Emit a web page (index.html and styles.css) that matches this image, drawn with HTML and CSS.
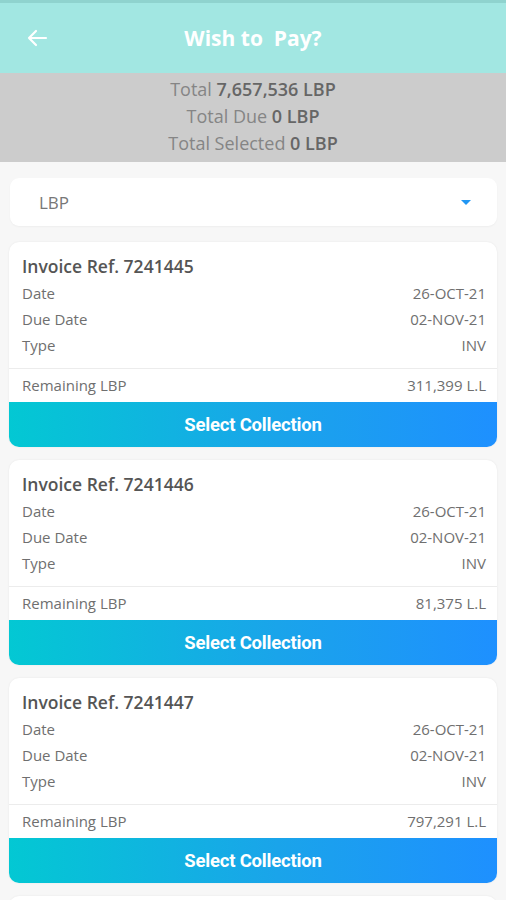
FILE: index.html
```html
<!DOCTYPE html>
<html>
    <head>
        <meta charset="UTF-8">
        <meta name="viewport" content="width=device-width, initial-scale=1.0">
        <title>Wish to Pay?</title>
        <link rel="stylesheet" href="styles.css">
    </head>
    <body>
        <div class="topbar">
            <svg class="backicon" width="24" height="24" viewBox="0 0 24 24">
                <path d="M21 12H4M11 5l-7 7 7 7" fill="none" stroke="white" stroke-width="2.2" stroke-linecap="round" stroke-linejoin="round"/>
            </svg>
            <h1>Wish to&nbsp; Pay?</h1>
        </div>

        <div class="summary">
            <p>Total <b>7,657,536 LBP</b></p>
            <p>Total Due <b>0 LBP</b></p>
            <p>Total Selected <b>0 LBP</b></p>
        </div>

        <div class="content">
            <div class="dropdown">
                <span>LBP</span>
                <span class="caret"></span>
            </div>

            <div class="invoice">
                <div class="invoicebody">
                    <h2>Invoice Ref. 7241445</h2>
                    <div class="row"><span>Date</span><span>26-OCT-21</span></div>
                    <div class="row"><span>Due Date</span><span>02-NOV-21</span></div>
                    <div class="row"><span>Type</span><span>INV</span></div>
                </div>
                <div class="row remaining"><span>Remaining LBP</span><span>311,399 L.L</span></div>
                <button class="selectbutton">Select Collection</button>
            </div>

            <div class="invoice">
                <div class="invoicebody">
                    <h2>Invoice Ref. 7241446</h2>
                    <div class="row"><span>Date</span><span>26-OCT-21</span></div>
                    <div class="row"><span>Due Date</span><span>02-NOV-21</span></div>
                    <div class="row"><span>Type</span><span>INV</span></div>
                </div>
                <div class="row remaining"><span>Remaining LBP</span><span>81,375 L.L</span></div>
                <button class="selectbutton">Select Collection</button>
            </div>

            <div class="invoice">
                <div class="invoicebody">
                    <h2>Invoice Ref. 7241447</h2>
                    <div class="row"><span>Date</span><span>26-OCT-21</span></div>
                    <div class="row"><span>Due Date</span><span>02-NOV-21</span></div>
                    <div class="row"><span>Type</span><span>INV</span></div>
                </div>
                <div class="row remaining"><span>Remaining LBP</span><span>797,291 L.L</span></div>
                <button class="selectbutton">Select Collection</button>
            </div>

            <div class="invoice nextcard"></div>
        </div>
    </body>
</html>
```

FILE: styles.css
```css
*{
    font-family: "Open Sans", "Noto Sans", sans-serif;
    box-sizing: border-box;
}
body{
    margin: 0;
    background-color: #f7f7f7;
    overflow: hidden;
    height: 900px;
}
.topbar{
    height: 73px;
    background-color: #a2e7e2;
    border-top: solid 3px #8fd3ce;
    display: flex;
    align-items: center;
    justify-content: center;
    position: relative;
}
.backicon{
    position: absolute;
    left: 25px;
    top: 23px;
}
h1{
    margin: 0;
    color: white;
    font-size: 21px;
    font-weight: 700;
}
.summary{
    background-color: #cccccc;
    height: 89px;
    padding-top: 5px;
    text-align: center;
    color: #858585;
    font-size: 18px;
}
.summary p{
    margin: 0;
    height: 27px;
    line-height: 22px;
}
.summary b{
    color: #666;
    font-weight: 600;
}
.content{
    padding: 16px 9px 0 9px;
}
.dropdown{
    margin: 0 0 0 1px;
    width: 487px;
    height: 48px;
    background-color: white;
    border-radius: 9px;
    display: flex;
    align-items: center;
    justify-content: space-between;
    padding: 0 26px 0 29px;
    color: #777;
    font-size: 17px;
    box-shadow: 0 1px 2px rgba(0,0,0,0.04);
}
.caret{
    width: 0;
    height: 0;
    border-left: 5px solid transparent;
    border-right: 5px solid transparent;
    border-top: 5px solid #2196f3;
}
.invoice{
    margin-top: 16px;
    background-color: white;
    border-radius: 10px;
    box-shadow: 0 0 2px rgba(0,0,0,0.08);
}
.invoice + .invoice{
    margin-top: 13px;
}
.nextcard{
    height: 40px;
}
.invoicebody{
    padding: 12px 11px 8px 13px;
    border-bottom: solid 1px #ececec;
}
h2{
    margin: 0 0 4px 0;
    font-size: 17.5px;
    font-weight: 600;
    color: #555;
    line-height: 24px;
}
.row{
    display: flex;
    justify-content: space-between;
    font-size: 15px;
    color: #6f6f6f;
    height: 26px;
    line-height: 22px;
}
.remaining{
    padding: 5px 11px 0 13px;
    height: 33px;
}
.selectbutton{
    display: block;
    width: 100%;
    height: 45px;
    border: none;
    border-radius: 0 0 10px 10px;
    background: linear-gradient(90deg, #03c8d3 0%, #1aa4ea 55%, #1e90ff 100%);
    color: white;
    font-family: Roboto, sans-serif;
    font-size: 18.5px;
    font-weight: 700;
    letter-spacing: -0.2px;
}
```
